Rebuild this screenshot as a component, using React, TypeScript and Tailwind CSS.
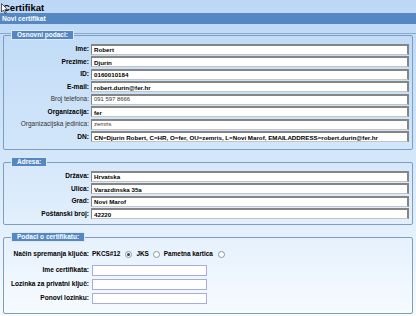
import type { ReactNode } from 'react'

interface Row {
  label: string
  value: string
  bold?: boolean
}

const osnovni: Row[] = [
  { label: 'Ime:', value: 'Robert', bold: true },
  { label: 'Prezime:', value: 'Djurin', bold: true },
  { label: 'ID:', value: '0160010184', bold: true },
  { label: 'E-mail:', value: 'robert.durin@fer.hr', bold: true },
  { label: 'Broj telefona:', value: '091 597 8666' },
  { label: 'Organizacija:', value: 'fer', bold: true },
  { label: 'Organizacijska jedinica:', value: 'zemris' },
  {
    label: 'DN:',
    value: 'CN=Djurin Robert, C=HR, O=fer, OU=zemris, L=Novi Marof, EMAILADDRESS=robert.durin@fer.hr',
    bold: true,
  },
]

const adresa: Row[] = [
  { label: 'Država:', value: 'Hrvatska', bold: true },
  { label: 'Ulica:', value: 'Varazdinska 35a', bold: true },
  { label: 'Grad:', value: 'Novi Marof', bold: true },
  { label: 'Poštanski broj:', value: '42220', bold: true },
]

function Section({ title, children, className }: { title: string; children: ReactNode; className?: string }) {
  return (
    <fieldset className={`mx-[3px] rounded-[2px] border border-[#7e9ec0] ${className ?? ''}`}>
      <legend className="ml-[7px] h-[10px] border border-[#dbe8f6] bg-[#5587c2] px-[5px] text-[6.5px] leading-[8px] font-bold text-white">
        {title}
      </legend>
      {children}
    </fieldset>
  )
}

function Field({ label, value, bold }: Row) {
  return (
    <div className="flex h-[12.5px] items-center">
      <span
        className={`w-[85px] shrink-0 text-right whitespace-nowrap ${
          bold ? 'text-[6.6px] font-bold text-black' : 'text-[6.5px] text-[#333]'
        }`}
      >
        {label}
      </span>
      <div
        className={`mr-[3px] ml-[2px] flex h-[11px] flex-1 items-center overflow-hidden whitespace-nowrap border border-t-2 border-r-2 border-[#858585] border-b-[#c4c4c4] bg-[#fffffd] pl-[2px] ${
          bold ? 'text-[6.2px] font-bold text-black' : 'text-[5.9px] text-[#333]'
        }`}
      >
        {value}
      </div>
    </div>
  )
}

function Radio({ checked }: { checked?: boolean }) {
  return (
    <span className="flex h-[7px] w-[7px] shrink-0 items-center justify-center rounded-full border border-[#8595a8] bg-white">
      {checked && <span className="h-[3px] w-[3px] rounded-full bg-[#2f3f55]" />}
    </span>
  )
}

function PlainInput({ label }: { label: string }) {
  return (
    <div className="flex h-[14px] items-center">
      <span className="w-[85px] shrink-0 text-right text-[6.6px] font-bold whitespace-nowrap text-black">{label}</span>
      <div className="ml-[3px] h-[11px] w-[115px] border border-[#a9a9e6] bg-white" />
    </div>
  )
}

export default function App() {
  return (
    <div className="relative h-[316px] w-[416px] overflow-hidden bg-gradient-to-b from-[#bcd8f6] via-[#d4e7fa] to-[#f7fbff] font-['Liberation_Sans',Arial,sans-serif]">
      {/* mouse cursor from the screenshot */}
      <svg className="absolute top-[3px] left-[1px]" width="7" height="11" viewBox="0 0 7 11">
        <path d="M0.5 0.5 L0.5 9 L2.5 7 L4 10.5 L5.3 10 L3.8 6.6 L6.5 6.6 Z" fill="#fff" stroke="#333" strokeWidth="0.8" />
      </svg>

      <div className="h-[13px] pl-[3px] text-[9.5px] leading-[15px] font-bold text-black">Certifikat</div>
      <div className="h-[11px] bg-[#5587c2] pl-[2px] text-[6.6px] leading-[11px] font-bold text-white">Novi certifikat</div>
      <div className="h-[10px] border-b border-[#88a9cc]" />

      <Section title="Osnovni podaci:" className="-mt-[4px] pt-[3px] pb-[6px]">
        {osnovni.map((r) => (
          <Field key={r.label} {...r} />
        ))}
      </Section>

      <Section title="Adresa:" className="mt-[7px] pt-[3px] pb-[4px]">
        {adresa.map((r) => (
          <Field key={r.label} {...r} />
        ))}
      </Section>

      <Section title="Podaci o certifikatu:" className="mt-[7px] pt-[5px] pb-[8px]">
        <div className="flex h-[14px] items-center text-[6.4px] font-bold whitespace-nowrap text-black">
          <span className="w-[85px] shrink-0 text-right text-[6.6px]">Način spremanja ključa:</span>
          <span className="ml-[3px]">PKCS#12</span>
          <span className="ml-[5px]">
            <Radio checked />
          </span>
          <span className="ml-[4px]">JKS</span>
          <span className="ml-[4px]">
            <Radio />
          </span>
          <span className="ml-[4px]">Pametna kartica</span>
          <span className="ml-[5px]">
            <Radio />
          </span>
        </div>
        <div className="mt-[2px]">
          <PlainInput label="Ime certifikata:" />
          <PlainInput label="Lozinka za privatni ključ:" />
          <PlainInput label="Ponovi lozinku:" />
        </div>
      </Section>
    </div>
  )
}
